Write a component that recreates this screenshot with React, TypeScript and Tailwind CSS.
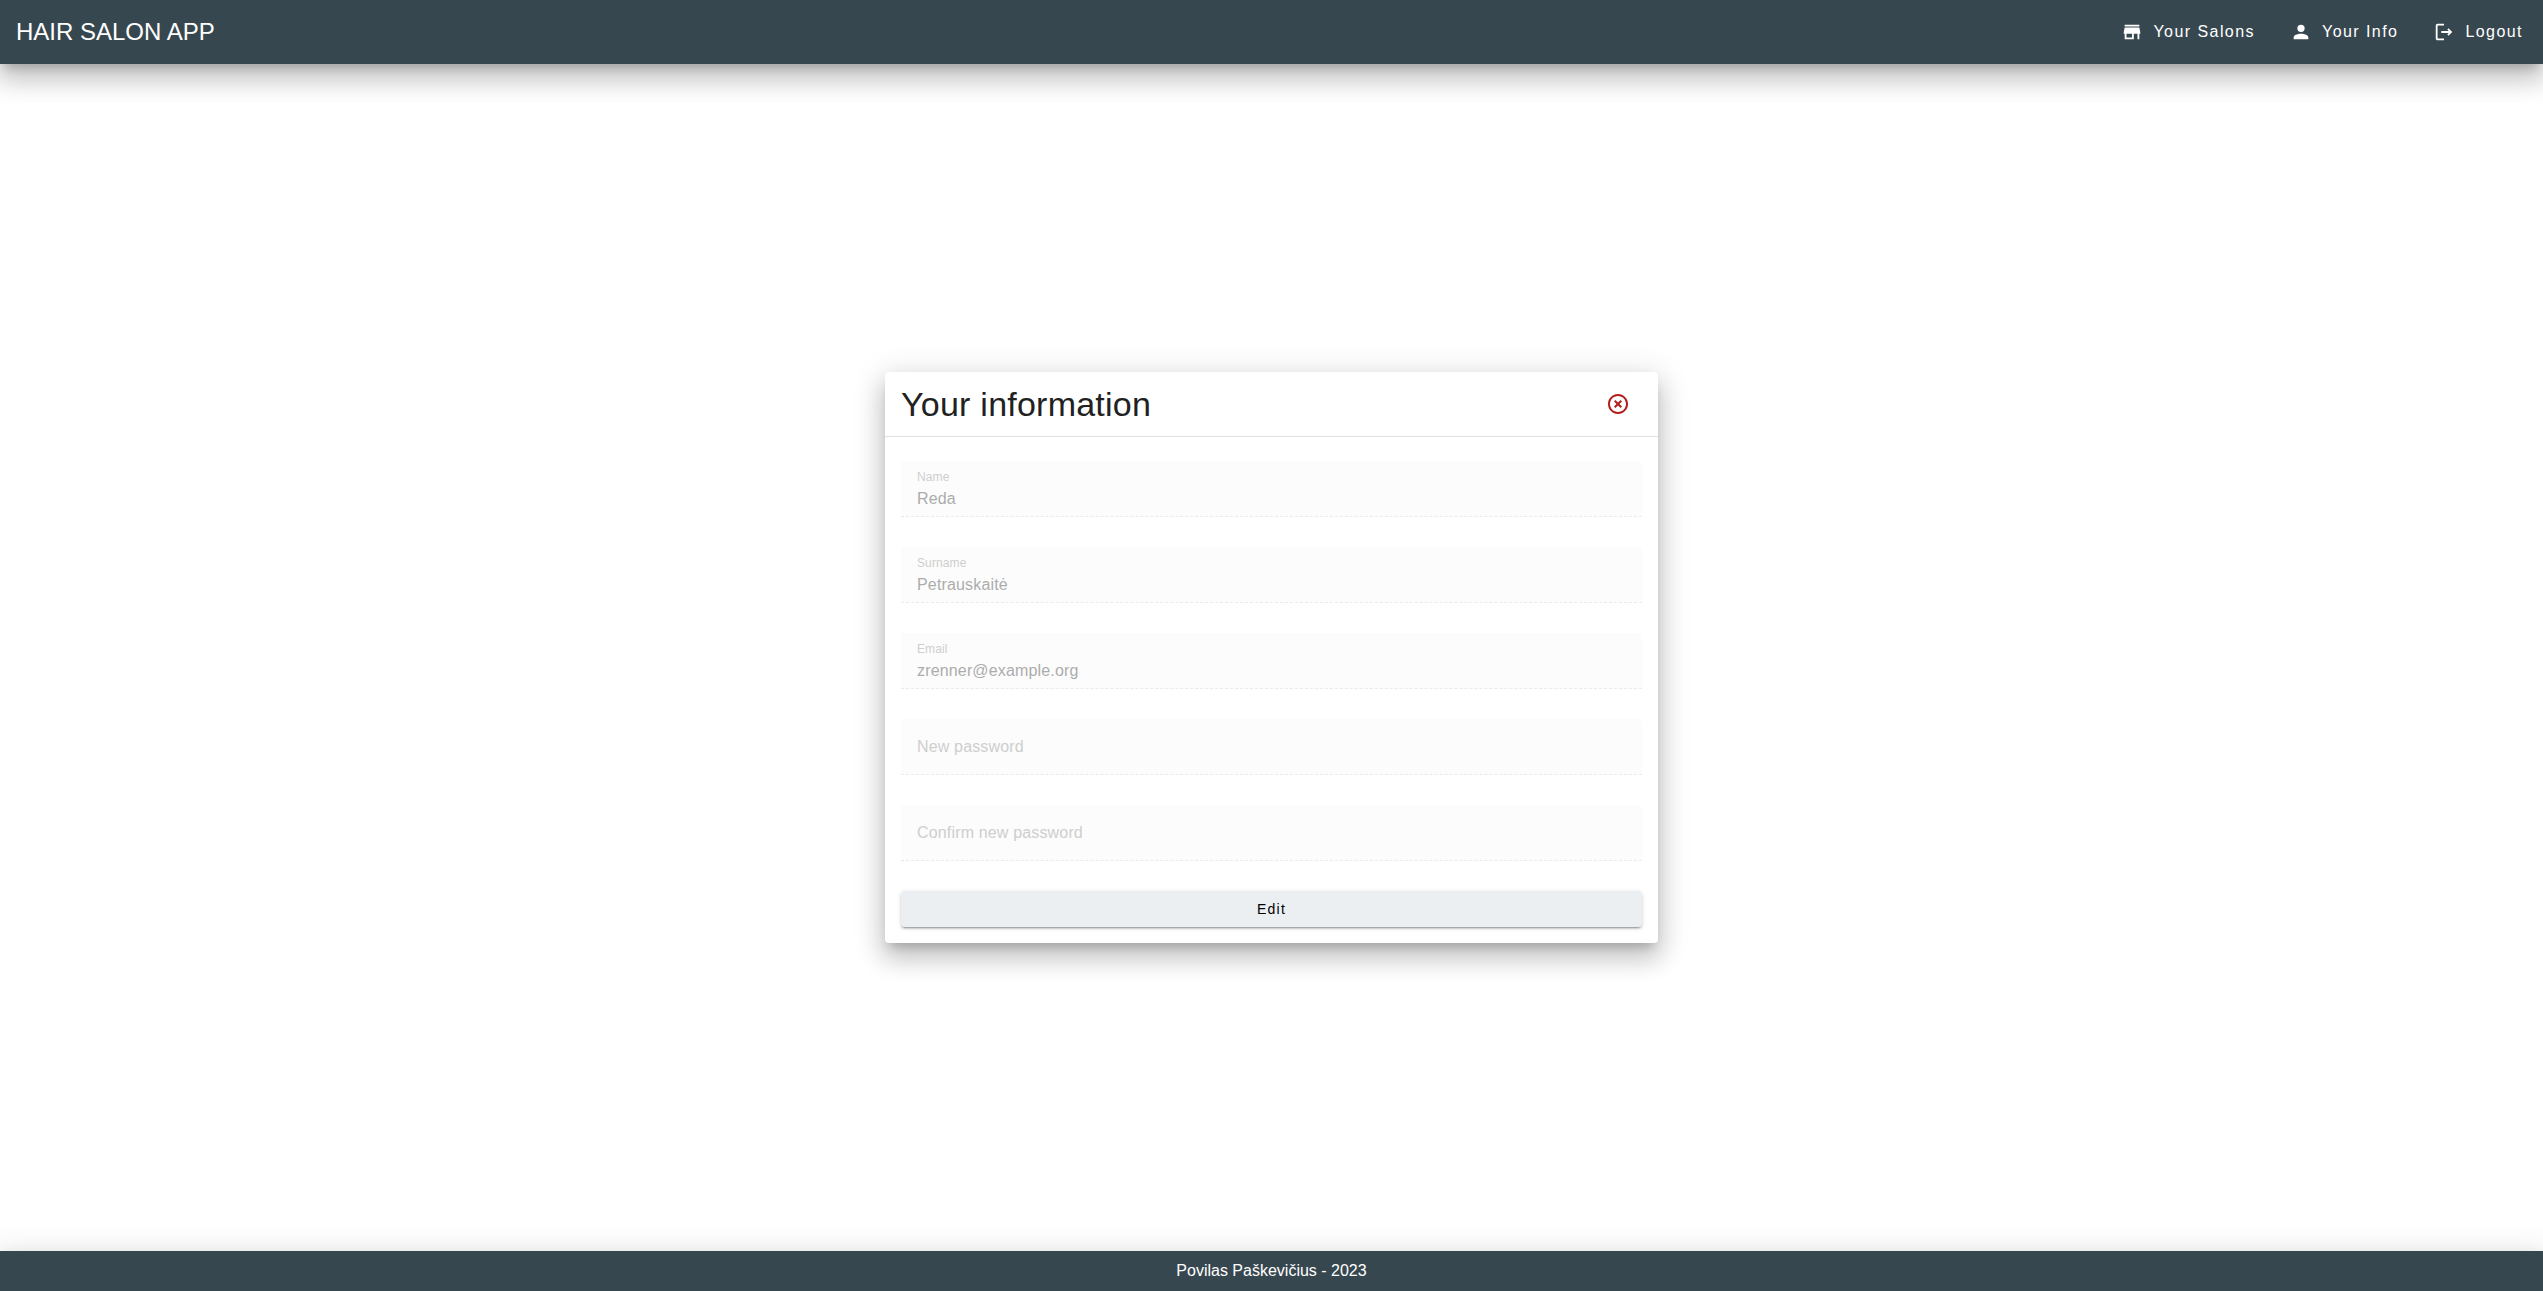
import React from "react";

const ELEVATION =
  "shadow-[0px_8px_10px_-5px_rgba(0,0,0,0.2),0px_16px_24px_2px_rgba(0,0,0,0.14),0px_6px_30px_5px_rgba(0,0,0,0.12)]";

function Icon({ path, className }: { path: string; className: string }) {
  return (
    <svg viewBox="0 0 24 24" fill="currentColor" aria-hidden="true" className={className}>
      <path d={path} />
    </svg>
  );
}

const icons = {
  store: "M12 18H6v-4h6m9 0v-2l-1-5H4l-1 5v2h1v6h10v-6h4v6h2v-6m0-10H4v2h16V4z",
  account:
    "M12 4a4 4 0 0 1 4 4 4 4 0 0 1-4 4 4 4 0 0 1-4-4 4 4 0 0 1 4-4m0 10c4.42 0 8 1.79 8 4v2H4v-2c0-2.21 3.58-4 8-4z",
  logout:
    "m17 8-1.41 1.41L17.17 11H9v2h8.17l-1.58 1.58L17 16l4-4-4-4M5 5h7V3H5a2 2 0 0 0-2 2v14c0 1.1.9 2 2 2h7v-2H5V5z",
  closeCircle:
    "M12 20c-4.41 0-8-3.59-8-8s3.59-8 8-8 8 3.59 8 8-3.59 8-8 8m0-18C6.47 2 2 6.47 2 12s4.47 10 10 10 10-4.47 10-10S17.53 2 12 2m2.59 6L12 10.59 9.41 8 8 9.41 10.59 12 8 14.59 9.41 16 12 13.41 14.59 16 16 14.59 13.41 12 16 9.41 14.59 8z",
};

function NavItem({ icon, label }: { icon: string; label: string }) {
  return (
    <a href="#" className="flex h-9 items-center gap-2.5 px-4 font-medium tracking-[0.09em]">
      <Icon path={icon} className="size-[22px]" />
      {label}
    </a>
  );
}

function Field({ id, label, value, type = "text" }: { id: string; label: string; value?: string; type?: string }) {
  return (
    <div className="flex h-14 flex-col justify-center rounded-t border-b border-dashed border-[#ebebeb] bg-[#fcfcfc] px-4">
      {value ? (
        <div className="flex flex-col gap-0.5 pt-0.5">
          <label htmlFor={id} className="text-xs leading-4 tracking-[0.01em] text-[#cecece]">
            {label}
          </label>
          <input
            id={id}
            type={type}
            disabled
            defaultValue={value}
            className="h-6 w-full bg-transparent tracking-[0.01em] text-[#acacac] outline-none"
          />
        </div>
      ) : (
        <input
          id={id}
          type={type}
          disabled
          placeholder={label}
          aria-label={label}
          className="h-6 w-full bg-transparent tracking-[0.01em] outline-none placeholder:text-[#cecece]"
        />
      )}
    </div>
  );
}

export default function App() {
  return (
    <div className="flex min-h-screen flex-col overflow-x-hidden bg-white font-['Liberation_Sans',Arial,sans-serif] text-base text-[#212121]">
      <header className={`z-10 flex h-16 items-center justify-between bg-[#37474f] pl-4 pr-1 text-white ${ELEVATION}`}>
        <div className="text-2xl">HAIR SALON APP</div>
        <nav className="flex items-center gap-[3px]">
          <NavItem icon={icons.store} label="Your Salons" />
          <NavItem icon={icons.account} label="Your Info" />
          <NavItem icon={icons.logout} label="Logout" />
        </nav>
      </header>

      <main className="flex flex-1 items-center justify-center">
        <section className={`w-full max-w-[773px] rounded bg-white ${ELEVATION}`}>
          <div className="flex h-16 items-center justify-between px-4">
            <h1 className="text-[34px] leading-10 tracking-[0.007em]">Your information</h1>
            <button type="button" aria-label="Close" className="flex size-12 items-center justify-center text-[#b71c1c]">
              <Icon path={icons.closeCircle} className="size-6" />
            </button>
          </div>
          <form className="flex flex-col border-t border-[#e0e0e0] px-4 pt-6 pb-4">
            <div className="flex flex-col gap-[30px] pb-[30px]">
              <Field id="name" label="Name" value="Reda" />
              <Field id="surname" label="Surname" value="Petrauskaitė" />
              <Field id="email" label="Email" type="email" value="zrenner@example.org" />
              <Field id="password" label="New password" type="password" />
              <Field id="confirm" label="Confirm new password" type="password" />
            </div>
            <button
              type="button"
              className="h-9 rounded bg-[#eceff1] text-sm font-medium tracking-[0.09em] text-black shadow-[0px_3px_1px_-2px_rgba(0,0,0,0.2),0px_2px_2px_0px_rgba(0,0,0,0.14),0px_1px_5px_0px_rgba(0,0,0,0.12)]"
            >
              Edit
            </button>
          </form>
        </section>
      </main>

      <footer className={`flex h-10 items-center justify-center bg-[#37474f] text-white ${ELEVATION}`}>
        Povilas Paškevičius - 2023
      </footer>
    </div>
  );
}
